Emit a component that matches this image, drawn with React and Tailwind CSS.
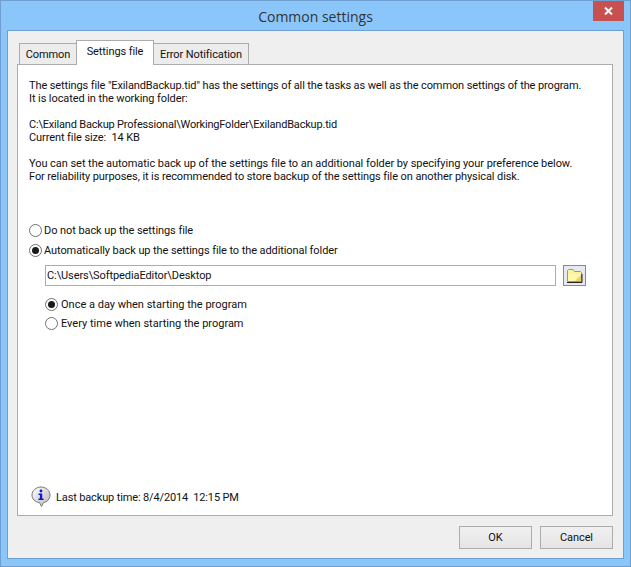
function Radio({ checked }) {
  return (
    <span className="w-[13px] h-[13px] rounded-full border border-[#707070] bg-white flex items-center justify-center shrink-0">
      {checked && <span className="w-[7px] h-[7px] rounded-full bg-[#1a1a1a]" />}
    </span>
  );
}

function Option({ checked, label, className = "" }) {
  return (
    <div className={"flex items-center " + className}>
      <Radio checked={checked} />
      <span>{label}</span>
    </div>
  );
}

function Folder() {
  return (
    <svg width="17" height="15" viewBox="0 0 17 15">
      <path d="M1.5 13.5V2.5L2.5 1.5H7L8.5 3.5H14.5L15.5 4.5V13.5Z" fill="#fdf2a0" stroke="#a89a50" />
      <path d="M2 6H15V13H2Z" fill="#fff8a8" />
      <path d="M9 13L15 7V13Z" fill="#ecd070" />
      <path d="M1 14.5H16V6" fill="none" stroke="#222" />
    </svg>
  );
}

function Info() {
  return (
    <svg width="20" height="22" viewBox="0 0 20 22">
      <defs>
        <linearGradient id="b" x1="0" y1="0" x2="1" y2="1">
          <stop offset="0" stopColor="#ffffff" />
          <stop offset="1" stopColor="#b8b8b8" />
        </linearGradient>
      </defs>
      <path d="M10 1C15 1 19 4.6 19 9C19 13 16 16 12.5 16.6L10.5 20.5L8.5 16.6C4 16 1 13 1 9C1 4.6 5 1 10 1Z" fill="url(#b)" stroke="#777" />
      <circle cx="10" cy="5" r="1.4" fill="#1515d0" />
      <path d="M7.5 7.5H11.2V12.5H12.6V14H7.5V12.5H8.9V9H7.5Z" fill="#1515d0" />
    </svg>
  );
}

export default function App() {
  const tabBase = "border-t border-x border-[#acacac] flex items-center justify-center";
  return (
    <div className="w-[631px] h-[567px] bg-[#8bc6fb] border border-[#6f9fcf] flex flex-col text-[#111] text-[11px] leading-[13px] tracking-[-0.09px] font-['Roboto',sans-serif] overflow-hidden">
      <div className="h-[29px] shrink-0 relative flex items-center justify-center text-[14px] tracking-normal text-[#333] pt-[1px] font-['Open_Sans',sans-serif]">
        Common settings
        <div className="absolute top-0 right-[6px] w-[31px] h-[20px] bg-[#c75050] flex items-center justify-center">
          <svg width="9" height="8" viewBox="0 0 9 8">
            <path d="M1 0.5L8 7.5M8 0.5L1 7.5" stroke="#fff" strokeWidth="2" />
          </svg>
        </div>
      </div>
      <div className="mx-[6px] mb-[7px] flex-1 border border-[#6f9fcf] bg-[#efefef] flex flex-col pt-[9px] px-[9px]">
        <div className="flex items-end h-[24px] pl-[2px] shrink-0 relative z-10">
          <div className={tabBase + " w-[58px] h-[21px] bg-[#ececec]"}>Common</div>
          <div className={tabBase + " w-[78px] h-[25px] mb-[-1px] bg-white -mx-px z-10 pb-[4px]"}>Settings file</div>
          <div className={tabBase + " w-[96px] h-[21px] bg-[#ececec]"}>Error Notification</div>
        </div>
        <div className="h-[452px] w-[596px] bg-white border border-[#acacac] flex flex-col pl-[11px] pr-[10px] pt-[14px] pb-[7px]">
          <p className="whitespace-nowrap tracking-[-0.115px]">The settings file "ExilandBackup.tid" has the settings of all the tasks as well as the common settings of the program.</p>
          <p>It is located in the working folder:</p>
          <p className="mt-[13px] tracking-[-0.19px]">C:\Exiland Backup Professional\WorkingFolder\ExilandBackup.tid</p>
          <p>Current file size:&nbsp; 14 KB</p>
          <p className="mt-[13px] whitespace-nowrap tracking-[-0.05px]">You can set the automatic back up of the settings file to an additional folder by specifying your preference below.</p>
          <p className="whitespace-nowrap">For reliability purposes, it is recommended to store backup of the settings file on another physical disk.</p>
          <Option label="Do not back up the settings file" className="h-[19px] gap-[2px] mt-[38px] tracking-[-0.07px]" />
          <Option checked label="Automatically back up the settings file to the additional folder" className="h-[19px] gap-[2px] mt-px" />
          <div className="flex items-center gap-[7px] ml-[16px] mt-[5px]">
            <div className="w-[511px] h-[21px] border border-[#acacac] px-px flex items-center">C:\Users\SoftpediaEditor\Desktop</div>
            <div className="w-[23px] h-[21px] border border-[#3c9cf0] bg-[#e6eaf0] flex items-center justify-center">
              <Folder />
            </div>
          </div>
          <Option checked label="Once a day when starting the program" className="h-[19px] gap-[3px] ml-[16px] mt-[9px] tracking-normal" />
          <Option label="Every time when starting the program" className="h-[19px] gap-[3px] ml-[16px] tracking-normal" />
          <div className="mt-auto flex items-center gap-[5px] ml-[2px]">
            <Info />
            <span className="whitespace-pre tracking-[-0.14px]">Last backup time: 8/4/2014  12:15 PM</span>
          </div>
        </div>
        <div className="flex justify-end gap-[8px] mt-[10px] mr-px">
          <button className="w-[73px] h-[23px] border border-[#acacac] bg-linear-to-b from-[#f0f0f0] to-[#e5e5e5]">OK</button>
          <button className="w-[73px] h-[23px] border border-[#acacac] bg-linear-to-b from-[#f0f0f0] to-[#e5e5e5]">Cancel</button>
        </div>
      </div>
    </div>
  );
}
